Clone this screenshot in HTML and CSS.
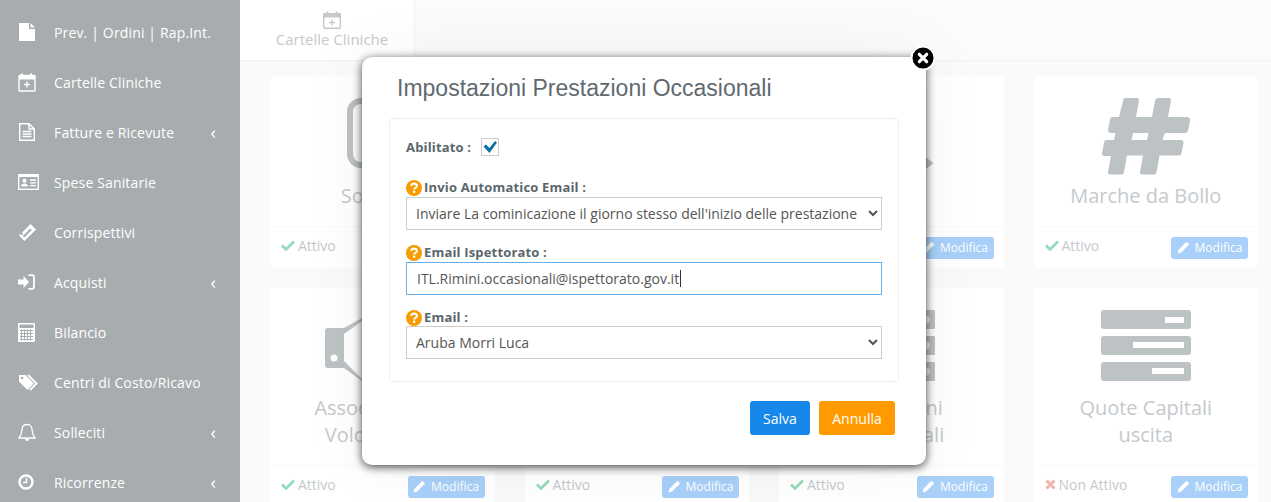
FILE: index.html
```html
<!DOCTYPE html>
<html lang="it">
<head>
<meta charset="utf-8">
<title>Impostazioni Prestazioni Occasionali</title>
<link rel="stylesheet" href="styles.css">
</head>
<body>
<aside class="sidebar">
  <a class="nav-item"><span class="nav-icon"><svg width="18" height="20" viewBox="0 0 18 20"><path d="M1 1h10v6h6v12H1z" fill="#fff"/><path d="M12.500 1l4.500 4.600h-4.500z" fill="#fff"/></svg></span><span>Prev. | Ordini | Rap.Int.</span></a>
  <a class="nav-item"><span class="nav-icon"><svg width="18" height="20" viewBox="0 0 18 20"><path d="M1.700 3.500h14.600a.7.7 0 0 1 .7.700v14.100a.7.7 0 0 1-.7.700H1.700a.7.7 0 0 1-.7-.7V4.200a.7.7 0 0 1 .7-.7z" fill="none" stroke="#fff" stroke-width="1.400"/><path d="M1 3.500h16v4H1z" fill="#fff"/><path d="M4 1.500v3M13 1.500v3" stroke="#fff" stroke-width="2"/><path d="M9 9.500v6M6 12.500h6" stroke="#fff" stroke-width="1.400"/></svg></span><span>Cartelle Cliniche</span></a>
  <a class="nav-item"><span class="nav-icon"><svg width="18" height="20" viewBox="0 0 18 20"><path d="M1.700 1.700h9.300l5.300 5.300v11.300H1.700z" fill="none" stroke="#fff" stroke-width="1.400"/><path d="M11 1.700v5.300h5.300" fill="none" stroke="#fff" stroke-width="1.400"/><path d="M4.500 9.500h9M4.500 12h9M4.500 14.500h9" stroke="#fff" stroke-width="1.300"/></svg></span><span>Fatture e Ricevute</span><span class="chev">&#8249;</span></a>
  <a class="nav-item"><span class="nav-icon"><svg width="21" height="16" viewBox="0 0 21 16"><rect x=".7" y=".7" width="19.600" height="14.600" fill="none" stroke="#fff" stroke-width="1.400"/><rect x=".7" y=".7" width="19.600" height="2.300" fill="#fff"/><circle cx="6.500" cy="6.800" r="2" fill="#fff"/><path d="M3 12.500c0-4 7-4 7 0z" fill="#fff"/><path d="M12 6h6M12 8.800h6M12 11.600h6" stroke="#fff" stroke-width="1.300"/></svg></span><span>Spese Sanitarie</span></a>
  <a class="nav-item"><span class="nav-icon"><svg width="19" height="19" viewBox="0 0 19 19"><path d="M12.500 1L18 6.500 6.500 18 1 12.500l1.500-1.500 1.500 1.300 1.300-1.300L4 9.500z" fill="#fff"/><path d="M12.300 5.500l1.500 1.500-7.500 7.500L4.800 13z" fill="#a7acae"/></svg></span><span>Corrispettivi</span></a>
  <a class="nav-item"><span class="nav-icon"><svg width="17" height="16" viewBox="0 0 17 16"><path d="M0 5.500h5.500V2l5.500 6-5.500 6v-3.500H0z" fill="#fff"/><path d="M10.500 1.200h3.500a2 2 0 0 1 2 2v9.600a2 2 0 0 1-2 2h-3.500" fill="none" stroke="#fff" stroke-width="1.800"/></svg></span><span>Acquisti</span><span class="chev">&#8249;</span></a>
  <a class="nav-item"><span class="nav-icon"><svg width="17" height="19" viewBox="0 0 17 19"><rect width="17" height="19" rx="1" fill="#fff"/><rect x="1.500" y="1.500" width="14" height="3.500" fill="#a7acae"/><path d="M2 7.500h13M2 10.500h13M2 13.500h13M2 16.500h13M3.500 6.500v11M6.500 6.500v11M9.500 6.500v11M12.500 6.500v11" stroke="#a7acae" stroke-width="1"/></svg></span><span>Bilancio</span></a>
  <a class="nav-item"><span class="nav-icon"><svg width="20" height="17" viewBox="0 0 20 17"><path d="M1 1h6.500L16 9.500 9.500 16 1 7.500z" fill="#fff"/><circle cx="4" cy="4" r="1.300" fill="#a7acae"/><path d="M10 1l8.600 8.500-6.500 6.500" fill="none" stroke="#fff" stroke-width="1.800"/></svg></span><span>Centri di Costo/Ricavo</span></a>
  <a class="nav-item"><span class="nav-icon"><svg width="18" height="19" viewBox="0 0 18 19"><path d="M9 1.500c-3.500 0-5 2.500-5 5 0 4-1 6-3 8.500h16c-2-2.500-3-4.500-3-8.500 0-2.500-1.500-5-5-5z" fill="none" stroke="#fff" stroke-width="1.300"/><path d="M7 16a2 2 0 0 0 4 0z" fill="#fff"/></svg></span><span>Solleciti</span><span class="chev">&#8249;</span></a>
  <a class="nav-item"><span class="nav-icon"><svg width="16" height="16" viewBox="0 0 16 16"><circle cx="8" cy="8" r="6.500" fill="none" stroke="#fff" stroke-width="2.400"/><path d="M8.500 4v4.500H5" fill="none" stroke="#fff" stroke-width="1.500"/></svg></span><span>Ricorrenze</span><span class="chev">&#8249;</span></a>
</aside>

<main class="main">
  <nav class="tabs">
    <a class="tab">
      <svg width="18" height="18" viewBox="0 0 18 18"><rect x=".7" y="2.700" width="16.600" height="14.600" rx=".6" fill="none" stroke="#c5c9cc" stroke-width="1.400"/><path d="M1 2.700h16V6.500H1z" fill="#c5c9cc"/><path d="M4.500 .5v3M13.500 .5v3" stroke="#c5c9cc" stroke-width="1.800"/><path d="M9 8.500v6M6 11.500h6" stroke="#c5c9cc" stroke-width="1.300"/></svg>
      <span>Cartelle Cliniche</span>
    </a>
  </nav>

  <section class="grid">
    <article class="card">
      <div class="card-body">
        <div class="card-icon"><svg width="70" height="70" viewBox="0 0 70 70"><rect x="3" y="3" width="64" height="64" rx="11" fill="none" stroke="#bdc2c4" stroke-width="6"/></svg></div>
        <h3 class="card-title">Software</h3>
      </div>
      <div class="card-foot"><span class="status"><svg class="st-icon" width="14" height="11" viewBox="0 0 14 11"><path d="M1 5.500l4 4L13 1.500" fill="none" stroke="#92dab8" stroke-width="2.600"/></svg>Attivo</span><a class="edit"><svg width="13" height="13" viewBox="0 0 13 13"><path d="M9.500 .8l2.700 2.700L4.200 11.500.6 12.400l.9-3.600z" fill="#fff"/></svg>Modifica</a></div>
    </article>
    <article class="card">
      <div class="card-body"><div class="card-icon"></div><h3 class="card-title"></h3></div>
      <div class="card-foot"><span class="status"><svg class="st-icon" width="14" height="11" viewBox="0 0 14 11"><path d="M1 5.500l4 4L13 1.500" fill="none" stroke="#92dab8" stroke-width="2.600"/></svg>Attivo</span><a class="edit"><svg width="13" height="13" viewBox="0 0 13 13"><path d="M9.500 .8l2.700 2.700L4.200 11.500.6 12.400l.9-3.600z" fill="#fff"/></svg>Modifica</a></div>
    </article>
    <article class="card">
      <div class="card-body">
        <div class="card-icon"><svg width="88" height="77" viewBox="0 0 88 77"><path d="M75 65l10-10a3 3 0 0 0 0-4L75 41z" transform="translate(0 28) scale(1 .7)" fill="#bdc2c4"/></svg></div>
        <h3 class="card-title"></h3>
      </div>
      <div class="card-foot"><span class="status"><svg class="st-icon" width="14" height="11" viewBox="0 0 14 11"><path d="M1 5.500l4 4L13 1.500" fill="none" stroke="#92dab8" stroke-width="2.600"/></svg>Attivo</span><a class="edit"><svg width="13" height="13" viewBox="0 0 13 13"><path d="M9.500 .8l2.700 2.700L4.200 11.500.6 12.400l.9-3.600z" fill="#fff"/></svg>Modifica</a></div>
    </article>
    <article class="card">
      <div class="card-body">
        <div class="card-icon"><svg width="88" height="77" viewBox="0 0 88 77"><path d="M21 3a3 3 0 0 1 3-3h11a2 2 0 0 1 2 2.500L34 19h16l3-16.500A3 3 0 0 1 56 0h11a2 2 0 0 1 2 2.500L66 19h19a3 3 0 0 1 3 3.500l-2 10a3 3 0 0 1-3 2.500H63l-2.500 7H79a2.500 2.500 0 0 1 2.500 3l-2 10a3 3 0 0 1-3 2.500H57.500l-3 16.500a2.500 2.500 0 0 1-3 2.500H40a2 2 0 0 1-2-2.500l3-16.500H25l-3 16.500a2.500 2.500 0 0 1-3 2.500H8a2 2 0 0 1-2-2.500L9 58H2.500A2.500 2.500 0 0 1 0 55l2-10a3 3 0 0 1 3-3h7l1.500-7H8.500A2.500 2.500 0 0 1 6 32l2-10a3 3 0 0 1 3-3h6z M31 35l-1.500 7h15.500l1.500-7z" fill="#bdc2c4" fill-rule="evenodd"/></svg></div>
        <h3 class="card-title">Marche da Bollo</h3>
      </div>
      <div class="card-foot"><span class="status"><svg class="st-icon" width="14" height="11" viewBox="0 0 14 11"><path d="M1 5.500l4 4L13 1.500" fill="none" stroke="#92dab8" stroke-width="2.600"/></svg>Attivo</span><a class="edit"><svg width="13" height="13" viewBox="0 0 13 13"><path d="M9.500 .8l2.700 2.700L4.200 11.500.6 12.400l.9-3.600z" fill="#fff"/></svg>Modifica</a></div>
    </article>

    <article class="card">
      <div class="card-body">
        <div class="card-icon"><svg width="114" height="71" viewBox="0 0 114 71"><path d="M3 18h16L37 8v63L19 58H3a3 3 0 0 1-3-3V21a3 3 0 0 1 3-3z" fill="#bdc2c4"/><path d="M19 24L37 11v58L19 51z" fill="#fff"/><circle cx="9" cy="48" r="3.500" fill="#fff"/></svg></div>
        <h3 class="card-title">Associazioni di<br>Volontariato</h3>
      </div>
      <div class="card-foot"><span class="status"><svg class="st-icon" width="14" height="11" viewBox="0 0 14 11"><path d="M1 5.500l4 4L13 1.500" fill="none" stroke="#92dab8" stroke-width="2.600"/></svg>Attivo</span><a class="edit"><svg width="13" height="13" viewBox="0 0 13 13"><path d="M9.500 .8l2.700 2.700L4.200 11.500.6 12.400l.9-3.600z" fill="#fff"/></svg>Modifica</a></div>
    </article>
    <article class="card">
      <div class="card-body"><div class="card-icon"></div><h3 class="card-title"></h3></div>
      <div class="card-foot"><span class="status"><svg class="st-icon" width="14" height="11" viewBox="0 0 14 11"><path d="M1 5.500l4 4L13 1.500" fill="none" stroke="#92dab8" stroke-width="2.600"/></svg>Attivo</span><a class="edit"><svg width="13" height="13" viewBox="0 0 13 13"><path d="M9.500 .8l2.700 2.700L4.200 11.500.6 12.400l.9-3.600z" fill="#fff"/></svg>Modifica</a></div>
    </article>
    <article class="card">
      <div class="card-body">
        <div class="card-icon"><svg width="88" height="71" viewBox="0 0 88 71"><g fill="#bdc2c4"><rect width="88" height="19" rx="1"/><rect y="26" width="88" height="19" rx="1"/><rect y="52" width="88" height="19" rx="1"/></g><g fill="#fff" opacity=".7"><circle cx="79" cy="9.500" r="4"/><circle cx="79" cy="35.500" r="4"/><circle cx="79" cy="61.500" r="4"/></g></svg></div>
        <h3 class="card-title">Prestazioni<br>Occasionali</h3>
      </div>
      <div class="card-foot"><span class="status"><svg class="st-icon" width="14" height="11" viewBox="0 0 14 11"><path d="M1 5.500l4 4L13 1.500" fill="none" stroke="#92dab8" stroke-width="2.600"/></svg>Attivo</span><a class="edit"><svg width="13" height="13" viewBox="0 0 13 13"><path d="M9.500 .8l2.700 2.700L4.200 11.500.6 12.400l.9-3.600z" fill="#fff"/></svg>Modifica</a></div>
    </article>
    <article class="card">
      <div class="card-body">
        <div class="card-icon"><svg width="90" height="71" viewBox="0 0 90 71"><g fill="#bdc2c4"><rect width="90" height="19" rx="3"/><rect y="26" width="90" height="19" rx="3"/><rect y="52" width="90" height="19" rx="3"/></g><g fill="#fff"><rect x="64" y="7" width="19" height="6"/><rect x="32" y="32" width="51" height="6"/><rect x="51" y="58" width="32" height="6"/></g></svg></div>
        <h3 class="card-title">Quote Capitali<br>uscita</h3>
      </div>
      <div class="card-foot"><span class="status"><svg class="st-icon" width="11" height="11" viewBox="0 0 11 11"><path d="M1.500 1.500l8 8M9.500 1.500l-8 8" stroke="#f3b4ae" stroke-width="3"/></svg>Non Attivo</span><a class="edit"><svg width="13" height="13" viewBox="0 0 13 13"><path d="M9.500 .8l2.700 2.700L4.200 11.500.6 12.400l.9-3.600z" fill="#fff"/></svg>Modifica</a></div>
    </article>
  </section>
</main>

<div class="modal">
  <a class="modal-close"><svg width="26" height="26" viewBox="0 0 26 26"><circle cx="13" cy="13" r="11.500" fill="#000" stroke="#fff" stroke-width="2"/><path d="M9.300 9.300l7.400 7.400M16.700 9.300l-7.400 7.400" stroke="#fff" stroke-width="3.200" stroke-linecap="round"/></svg></a>
  <h2 class="modal-title">Impostazioni Prestazioni Occasionali</h2>
  <div class="panel">
    <div class="check-row">
      <span class="label">Abilitato :</span>
      <span class="checkbox"><svg width="16" height="14" viewBox="0 0 16 14"><path d="M1.500 6.500L4 4.500l3.500 3.500L13 1l2 1.500-7.500 10.500z" fill="#0a6fa6"/></svg></span>
    </div>
    <div class="field first">
      <div class="label-row"><svg class="help" width="16" height="16" viewBox="0 0 17 17"><circle cx="8.500" cy="8.500" r="8.500" fill="#f59c00"/><path d="M5.600 6.400c0-3.400 6-3.400 6-.2 0 2-3 2.100-3 3.900" fill="none" stroke="#fff" stroke-width="2.200"/><rect x="7.400" y="11.300" width="2.400" height="2.400" fill="#fff"/></svg><span class="label">Invio Automatico Email :</span></div>
      <select class="control"><option>Inviare La cominicazione il giorno stesso dell'inizio delle prestazione</option></select>
    </div>
    <div class="field">
      <div class="label-row"><svg class="help" width="16" height="16" viewBox="0 0 17 17"><circle cx="8.500" cy="8.500" r="8.500" fill="#f59c00"/><path d="M5.600 6.400c0-3.400 6-3.400 6-.2 0 2-3 2.100-3 3.900" fill="none" stroke="#fff" stroke-width="2.200"/><rect x="7.400" y="11.300" width="2.400" height="2.400" fill="#fff"/></svg><span class="label">Email Ispettorato :</span></div>
      <div class="input-wrap"><input class="control focused" type="text" value="ITL.Rimini.occasionali@ispettorato.gov.it"><span class="caret"></span></div>
    </div>
    <div class="field last">
      <div class="label-row"><svg class="help" width="16" height="16" viewBox="0 0 17 17"><circle cx="8.500" cy="8.500" r="8.500" fill="#f59c00"/><path d="M5.600 6.400c0-3.400 6-3.400 6-.2 0 2-3 2.100-3 3.900" fill="none" stroke="#fff" stroke-width="2.200"/><rect x="7.400" y="11.300" width="2.400" height="2.400" fill="#fff"/></svg><span class="label">Email :</span></div>
      <select class="control"><option>Aruba Morri Luca</option></select>
    </div>
  </div>
  <div class="modal-actions">
    <button class="btn btn-save" type="button">Salva</button>
    <button class="btn btn-cancel" type="button">Annulla</button>
  </div>
</div>
</body>
</html>
```

FILE: styles.css
```css
* { box-sizing: border-box; }
html, body { margin: 0; height: 502px; overflow: hidden; }
body {
  display: flex;
  position: relative;
  background: #fafafa;
  font-family: "Open Sans", sans-serif;
  font-size: 14px;
  color: #5f686d;
}

.sidebar {
  width: 240px;
  flex: none;
  background: #a7acae;
  padding-top: 7px;
  color: #fff;
  letter-spacing: .15px;
}
.nav-item {
  display: flex;
  align-items: center;
  height: 50px;
  padding: 0 24px 0 18px;
}
.nav-icon {
  width: 36px;
  flex: none;
  display: flex;
  align-items: center;
}
.nav-icon svg { display: block; }
.chev { margin-left: auto; font-size: 18px; line-height: 1; }

.main { flex: 1; min-width: 0; }
.tabs {
  height: 61px;
  border-bottom: 1px solid #f2f2f2;
  background: #fbfbfb;
}
.tab {
  width: 175px;
  height: 60px;
  background: #fff;
  border-right: 1px solid #f2f2f2;
  padding: 11px 0 0 10px;
  display: flex;
  flex-direction: column;
  align-items: center;
  gap: 1px;
  font-size: 15px;
  color: #c5c9cc;
}
.tab span { line-height: 19px; }

.grid {
  display: grid;
  grid-template-columns: repeat(4, 1fr);
  gap: 20px 30px;
  padding: 15px 13px 0 30px;
}
.card {
  background: #fff;
  border-radius: 3px;
  display: flex;
  flex-direction: column;
}
.card-body {
  flex: 1;
  padding: 22px 0 17px;
  text-align: center;
}
.card-icon { height: 84px; }
.card-icon svg { display: block; margin: 0 auto; }
.card-title {
  margin: 0;
  font-size: 20px;
  font-weight: 400;
  line-height: 27px;
  color: #c5c9cc;
}
.card-foot {
  height: 42px;
  flex: none;
  border-top: 1px solid #f9f9f9;
  padding: 0 10px 0 11px;
  display: flex;
  align-items: center;
  justify-content: space-between;
}
.status {
  display: flex;
  align-items: center;
  gap: 3px;
  color: #c5c9cc;
  margin-top: -4px;
}
.edit {
  width: 77px;
  height: 22px;
  background: #a8d0f8;
  border-radius: 3px;
  color: #fff;
  font-size: 12px;
  display: flex;
  align-items: center;
  justify-content: center;
  gap: 5px;
}

.modal {
  position: absolute;
  left: 362px;
  top: 57px;
  width: 564px;
  height: 408px;
  background: #fff;
  border-radius: 10px;
  padding: 0 27px;
  box-shadow: 0 2px 10px rgba(0, 0, 0, .72), 0 0 70px rgba(0, 0, 0, .05);
}
.modal-close {
  position: absolute;
  right: -10px;
  top: -12px;
  line-height: 0;
}
.modal-title {
  margin: 0;
  padding: 16px 0 0 8px;
  height: 61px;
  font-family: "Liberation Sans", Arial, sans-serif;
  font-size: 23px;
  font-weight: 400;
  line-height: 30px;
  color: #5f6a70;
}
.panel {
  height: 264px;
  border: 1px solid #efefef;
  border-radius: 4px;
  padding: 19px 16px 0;
}
.label {
  font-size: 13px;
  font-weight: 700;
  line-height: 17px;
  letter-spacing: .17px;
  color: #5a666c;
}
.check-row { display: flex; align-items: center; gap: 10px; height: 18px; }
.checkbox {
  width: 18px;
  height: 18px;
  border: 1px solid #ccc;
  display: flex;
  align-items: center;
  justify-content: center;
}
.field { margin-top: 14px; }
.field.first { margin-top: 23px; }
.label-row { display: flex; align-items: flex-start; gap: 2px; height: 18px; }
.field.last .label-row { height: 17px; }
.help { flex: none; margin-top: 1px; }
.control {
  display: block;
  width: 100%;
  height: 33px;
  margin: 0;
  border: 1px solid #ccc;
  border-radius: 0;
  background: #fff;
  padding: 0 5px;
  font-family: "Open Sans", sans-serif;
  font-size: 14px;
  color: #555;
}
.input-wrap { position: relative; }
.focused { border-color: #66afe9; padding: 0 10px; outline: none; }
.caret {
  position: absolute;
  left: 274px;
  top: 8px;
  width: 1px;
  height: 17px;
  background: #333;
}
.modal-actions {
  display: flex;
  justify-content: flex-end;
  gap: 9px;
  padding: 19px 4px 0 0;
}
.btn {
  height: 34px;
  border: 0;
  border-radius: 3px;
  color: #fff;
  font-family: "Open Sans", sans-serif;
  font-size: 14px;
  padding: 0;
}
.btn-save { width: 60px; background: #1787ea; }
.btn-cancel { width: 76px; background: #ff9b00; }
```
